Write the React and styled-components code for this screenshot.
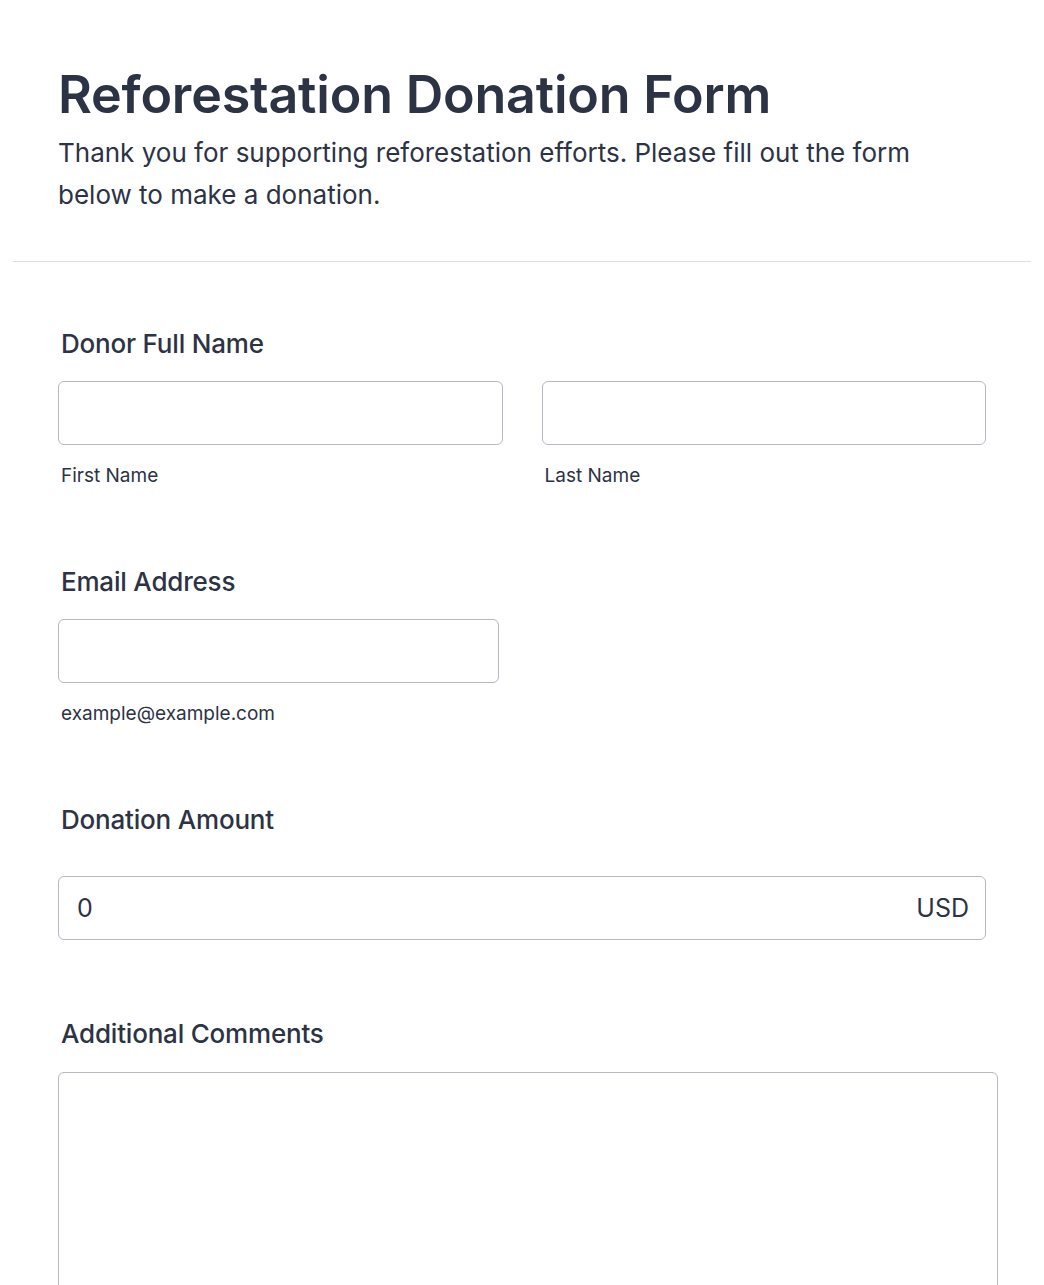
import React from "react";
import styled, { createGlobalStyle } from "styled-components";

const GlobalStyle = createGlobalStyle`
  body {
    margin: 0;
    background: #ffffff;
    font-family: Inter, "Noto Sans", sans-serif;
    color: #2c3345;
  }
`;

function Field({ label, children }) {
  return (
    <Section>
      <Label>{label}</Label>
      {children}
    </Section>
  );
}

function App() {
  return (
    <Page>
      <GlobalStyle />
      <Header>
        <Title>Reforestation Donation Form</Title>
        <Subtitle>
          Thank you for supporting reforestation efforts. Please fill out the
          form below to make a donation.
        </Subtitle>
      </Header>
      <Divider />
      <Form>
        <Field label="Donor Full Name">
          <NameRow>
            <Column>
              <Input type="text" />
              <SubLabel>First Name</SubLabel>
            </Column>
            <Column>
              <Input type="text" />
              <SubLabel>Last Name</SubLabel>
            </Column>
          </NameRow>
        </Field>
        <Field label="Email Address">
          <Column width="441px">
            <Input type="email" />
            <SubLabel>example@example.com</SubLabel>
          </Column>
        </Field>
        <Field label="Donation Amount">
          <AmountBox>
            <AmountValue>0</AmountValue>
            <Currency>USD</Currency>
          </AmountBox>
        </Field>
        <Field label="Additional Comments">
          <Comments />
        </Field>
      </Form>
    </Page>
  );
}

export default App;

const Page = styled.div`
  padding: 0 13px;
  min-height: 1285px;
  box-sizing: border-box;
`;

const Header = styled.header`
  padding: 58px 45px 45px;
`;

const Title = styled.h1`
  margin: 0;
  font-size: 52px;
  font-weight: 600;
  line-height: 74px;
  letter-spacing: -0.2px;
`;

const Subtitle = styled.p`
  margin: 0;
  max-width: 870px;
  font-size: 26px;
  line-height: 42px;
  font-weight: 400;
`;

const Divider = styled.hr`
  margin: 0;
  border: none;
  border-top: 1px solid #dcdfe5;
`;

const Form = styled.div`
  padding: 66px 45px 0;
  display: flex;
  flex-direction: column;
  gap: 78px;
`;

const Section = styled.div`
  display: flex;
  flex-direction: column;
`;

const Label = styled.div`
  padding-left: 3px;
  margin-bottom: 21px;
  font-size: 26px;
  line-height: 32px;
  font-weight: 500;
  letter-spacing: -0.2px;
`;

const NameRow = styled.div`
  display: flex;
  gap: 39px;
  width: 928px;
`;

const Column = styled.div`
  display: flex;
  flex-direction: column;
  width: ${(p) => p.width || "auto"};
  flex: ${(p) => (p.width ? "none" : 1)};
`;

const Input = styled.input`
  box-sizing: border-box;
  width: 100%;
  height: 64px;
  border: 1px solid #b4b9c6;
  border-radius: 6px;
  background: #ffffff;
  outline: none;
`;

const SubLabel = styled.span`
  padding-left: 3px;
  margin-top: 19px;
  font-size: 19px;
  line-height: 24px;
  color: #2c3345;
`;

const AmountBox = styled.div`
  box-sizing: border-box;
  width: 928px;
  height: 64px;
  margin-top: 19px;
  display: flex;
  align-items: center;
  justify-content: space-between;
  padding: 0 16px 0 18px;
  border: 1px solid #b4b9c6;
  border-radius: 6px;
  font-size: 25px;
`;

const AmountValue = styled.span``;

const Currency = styled.span``;

const Comments = styled.textarea`
  box-sizing: border-box;
  width: 940px;
  height: 260px;
  margin-top: 1px;
  border: 1px solid #b4b9c6;
  border-radius: 6px;
  resize: none;
  outline: none;
`;
